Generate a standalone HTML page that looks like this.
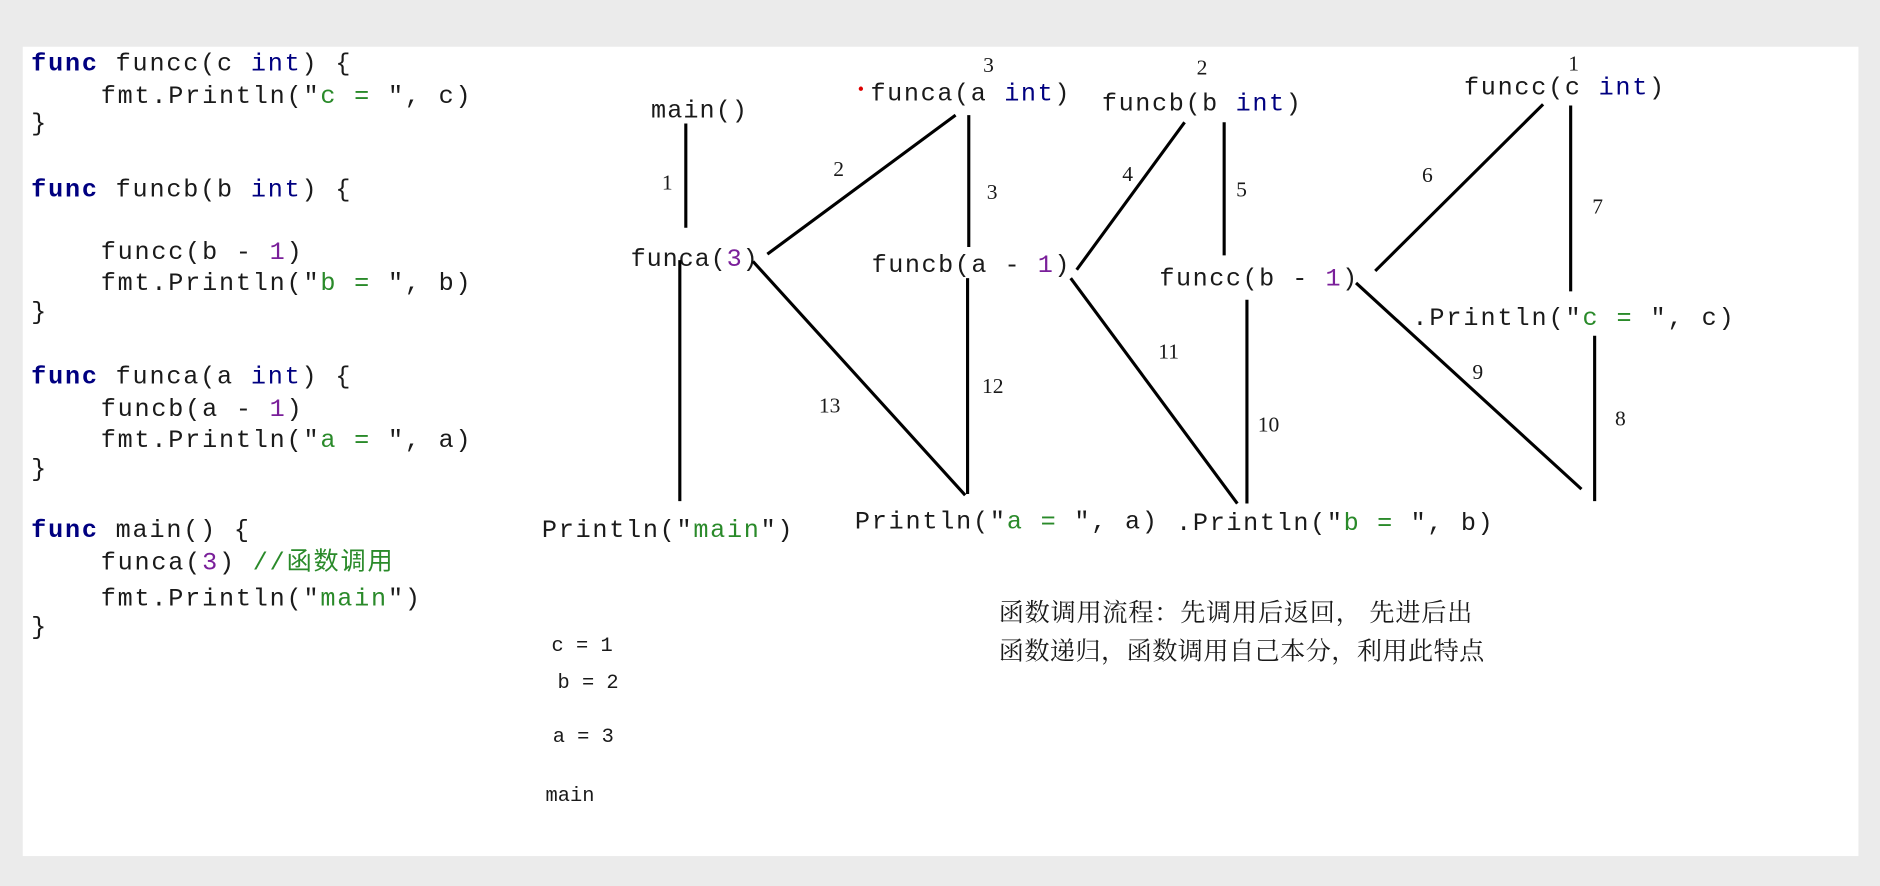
<!DOCTYPE html>
<html><head><meta charset="utf-8"><style>
html,body{margin:0;padding:0;background:#ebebeb;width:1880px;height:886px;overflow:hidden}
svg{display:block}
.c{font-family:"Liberation Mono","Noto Sans CJK SC",monospace;font-size:21px;letter-spacing:1.5px;fill:#1a1a1a}
.k{fill:#000080;font-weight:bold}
.t{fill:#000080}
.s{fill:#2a8a2a}
.n{fill:#7a1f9a}
.d{font-family:"Liberation Mono",monospace;font-size:21px;fill:#1a1a1a}
.num{font-family:"Liberation Serif",serif;font-size:18px;fill:#1a1a1a}
.o{font-family:"Liberation Mono",monospace;font-size:17px;fill:#1a1a1a}
.zh{font-family:"Liberation Sans","Noto Serif CJK SC",serif;font-size:21px;fill:#1a1a1a}
line{stroke:#000;stroke-width:2.6}
</style></head><body>
<svg width="1880" height="886" viewBox="0 0 1568 739" preserveAspectRatio="none">
<rect x="19" y="39" width="1531" height="675" fill="#fff"/>
<text class="c" x="26" y="59"><tspan class="k">func</tspan> funcc(c <tspan class="t">int</tspan>) {</text>
<text class="c" x="84" y="86">fmt.Println("<tspan class="s">c = </tspan>", c)</text>
<text class="c" x="26" y="109">}</text>
<text class="c" x="26" y="164"><tspan class="k">func</tspan> funcb(b <tspan class="t">int</tspan>) {</text>
<text class="c" x="84" y="216">funcc(b - <tspan class="n">1</tspan>)</text>
<text class="c" x="84" y="242">fmt.Println("<tspan class="s">b = </tspan>", b)</text>
<text class="c" x="26" y="266">}</text>
<text class="c" x="26" y="320"><tspan class="k">func</tspan> funca(a <tspan class="t">int</tspan>) {</text>
<text class="c" x="84" y="347">funcb(a - <tspan class="n">1</tspan>)</text>
<text class="c" x="84" y="373">fmt.Println("<tspan class="s">a = </tspan>", a)</text>
<text class="c" x="26" y="397">}</text>
<text class="c" x="26" y="448"><tspan class="k">func</tspan> main() {</text>
<text class="c" x="84" y="475">funca(<tspan class="n">3</tspan>) <tspan class="s">//函数调用</tspan></text>
<text class="c" x="84" y="505">fmt.Println("<tspan class="s">main</tspan>")</text>
<text class="c" x="26" y="529">}</text>
<text class="d" x="543" y="98" textLength="80">main()</text>
<circle cx="718" cy="74" r="1.8" fill="#d00"/>
<text class="num" x="820" y="60">3</text>
<text class="d" x="726" y="84" textLength="166">funca(a <tspan class="t">int</tspan>)</text>
<text class="num" x="998" y="62">2</text>
<text class="d" x="919" y="92" textLength="166">funcb(b <tspan class="t">int</tspan>)</text>
<text class="num" x="1308" y="59">1</text>
<text class="d" x="1221" y="79" textLength="167">funcc(c <tspan class="t">int</tspan>)</text>
<text class="d" x="526" y="222" textLength="106">funca(<tspan class="n">3</tspan>)</text>
<text class="d" x="727" y="227" textLength="165">funcb(a - <tspan class="n">1</tspan>)</text>
<text class="d" x="967" y="238" textLength="165">funcc(b - <tspan class="n">1</tspan>)</text>
<text class="d" x="1178" y="271" textLength="268">.Println("<tspan class="s">c = </tspan>", c)</text>
<text class="d" x="452" y="448" textLength="209">Println("<tspan class="s">main</tspan>")</text>
<text class="d" x="713" y="441" textLength="252">Println("<tspan class="s">a = </tspan>", a)</text>
<text class="d" x="981" y="442" textLength="264">.Println("<tspan class="s">b = </tspan>", b)</text>
<text class="num" x="552" y="158">1</text>
<text class="num" x="695" y="147">2</text>
<text class="num" x="823" y="166">3</text>
<text class="num" x="936" y="151">4</text>
<text class="num" x="1031" y="164">5</text>
<text class="num" x="1186" y="152">6</text>
<text class="num" x="1328" y="178">7</text>
<text class="num" x="1347" y="355">8</text>
<text class="num" x="1228" y="316">9</text>
<text class="num" x="1049" y="360">10</text>
<text class="num" x="966" y="299">11</text>
<text class="num" x="819" y="328">12</text>
<text class="num" x="683" y="344">13</text>
<line x1="572" y1="103" x2="572" y2="190"/>
<line x1="567" y1="217" x2="567" y2="418"/>
<line x1="640" y1="212" x2="797" y2="96"/>
<line x1="808" y1="96" x2="808" y2="206"/>
<line x1="628" y1="218" x2="805" y2="413"/>
<line x1="807" y1="232" x2="807" y2="412"/>
<line x1="898" y1="225" x2="988" y2="102"/>
<line x1="1021" y1="102" x2="1021" y2="213"/>
<line x1="893" y1="232" x2="1032" y2="420"/>
<line x1="1040" y1="250" x2="1040" y2="420"/>
<line x1="1147" y1="226" x2="1287" y2="87"/>
<line x1="1310" y1="88" x2="1310" y2="243"/>
<line x1="1131" y1="236" x2="1319" y2="408"/>
<line x1="1330" y1="280" x2="1330" y2="418"/>
<text class="o" x="460" y="543">c = 1</text>
<text class="o" x="465" y="574">b = 2</text>
<text class="o" x="461" y="619">a = 3</text>
<text class="o" x="455" y="668">main</text>
<text class="zh" x="833" y="518" textLength="395">函数调用流程：先调用后返回， 先进后出</text>
<text class="zh" x="833" y="550" textLength="405">函数递归，函数调用自己本分，利用此特点</text>
</svg>
</body></html>
